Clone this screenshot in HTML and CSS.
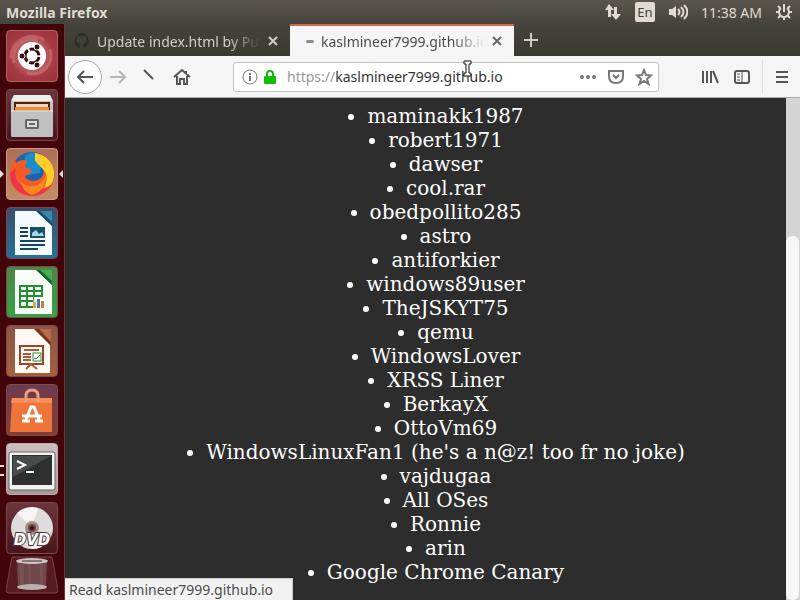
FILE: index.html
```html
<!DOCTYPE html>
<html lang="en">
<head>
    <meta charset="UTF-8">
    <meta name="viewport" content="width=device-width, initial-scale=1.0">
    <title>Mozilla Firefox</title>
    <link rel="stylesheet" href="styles.css">
</head>
<body>
    <header class="panel">
        <h1 class="panel-title">Mozilla Firefox</h1>
        <div class="indicators">
            <svg width="18" height="18" viewBox="0 0 18 18" fill="#dfdbd2"><path d="M5 1l5 6H7v7H4V7H1z"/><path d="M12 17L7 11h3V4h3v7h4z"/></svg>
            <span class="lang">En</span>
            <svg class="volume" width="20" height="18" viewBox="0 0 20 18" fill="none" stroke="#dfdbd2" stroke-width="2"><path d="M1 6h3l4-3v12l-4-3H1z" fill="#dfdbd2" stroke="none"/><path d="M10 6q3 3 0 6M13 4q5 5 0 10M16 2q7 7 0 14"/></svg>
            <time class="clock">11:38 AM</time>
            <svg width="18" height="18" viewBox="0 0 18 18" fill="none" stroke="#dfdbd2" stroke-width="2"><path d="M6 5a5 5 0 1 0 6 0M9 1v8M1 9h3M14 9h3M3 3l2 2M15 3l-2 2M3 15l2-2M15 15l-2-2M9 14v3"/></svg>
        </div>
    </header>

    <div class="desktop">
        <nav class="launcher">
            <ul class="apps">
                <li>
                    <button class="app dash" aria-label="Search your computer">
                        <svg viewBox="0 0 52 52"><path d="M8 33C4 18 17 6 31 10M44 19c5 15-8 28-23 24M5 28C5 10 24 1 38 10" fill="none" stroke="#d98b8b" stroke-width="3" opacity=".4"/><circle cx="26" cy="26" r="14" fill="#fff"/><circle cx="26" cy="26" r="7" fill="none" stroke="#3b0a0e" stroke-width="3" stroke-dasharray="12.7 2" stroke-dashoffset="-1"/><g fill="#3b0a0e" stroke="#fff"><circle cx="16" cy="26" r="3"/><circle cx="31" cy="17" r="3"/><circle cx="31" cy="35" r="3"/></g></svg>
                    </button>
                </li>
                <li>
                    <button class="app files" aria-label="Files">
                        <svg viewBox="0 0 52 52"><path d="M8 6h36l3 5v35q0 2-2 2H7q-2 0-2-2V11z" fill="#c3c3c1"/><path d="M8 6h36l2 6H6z" fill="#eee"/><path d="M8 13h36v9H8z" fill="#532012"/><path d="M10 15h32v3H10z" fill="#f4d6b0"/><path d="M9 18h34v4H9z" fill="#e58d42"/><path d="M5 22h42v24q0 2-2 2H7q-2 0-2-2z" fill="#bfc0bf"/><path d="M5 22h42" stroke="#eee"/><rect x="20" y="31" width="12" height="8" rx="1" fill="#ddd" stroke="#666" stroke-width="2"/><path d="M23 35h6" stroke="#666" stroke-width="2"/></svg>
                    </button>
                </li>
                <li class="running active">
                    <button class="app firefox" aria-label="Firefox">
                        <svg viewBox="0 0 52 52"><circle cx="26" cy="25" r="21" fill="#1d62ad"/><path d="M19 8q8-7 18 0l-3 17-17 3z" fill="#1b8ccc"/><path d="M29 5c10 1 18 9 19 18 2 15-9 25-22 25C12 48 3 38 4 25 4 19 7 14 9 10l1 5c3-3 8-4 12-2-3 2-3 5-2 7l6 2c0 4-6 4-7 7 4 5 11 5 16 1 6-6 1-13-3-17-2-4-3-6-3-8z" fill="#f65a25"/><path d="M29 5c12 2 18 10 19 19 1 10-6 19-15 22 6-5 9-13 7-20-2-6-9-9-11-14z" fill="#ffcf28"/><path d="M4 25c0 13 9 22 22 23 9 0 16-5 20-12-9 7-22 8-31 1-5-4-7-10-5-17z" fill="#ed3448"/><path d="M15 34c9 8 20 4 25-6 0 9-5 17-14 19-6-2-10-7-11-13z" fill="#ff871f"/></svg>
                    </button>
                </li>
                <li>
                    <button class="app writer" aria-label="LibreOffice Writer">
                        <svg viewBox="0 0 52 52"><path d="M9 4h22l15 15v29H9z" fill="#f5fbfc"/><path d="M30 4h16v15z" fill="#164d70"/><path d="M34 4h12v11z" fill="#3c86aa"/><path d="M14 21h8M14 25h8M14 29h8M14 34h25M14 38h25M14 42h18" stroke="#13475f" stroke-width="2"/><rect x="24" y="20" width="15" height="11" fill="#17506b"/><path d="M26 29v-3l4-3 3 4 3-2 2 4z" fill="#a8d5df"/></svg>
                    </button>
                </li>
                <li>
                    <button class="app calc" aria-label="LibreOffice Calc">
                        <svg viewBox="0 0 52 52"><path d="M9 4h22l15 15v29H9z" fill="#f7fff7"/><path d="M30 4h16v15z" fill="#17632a"/><path d="M34 4h12v11z" fill="#49ad54"/><path d="M14 20h22v21H14zM14 25h22M14 30h22M14 35h22M21 20v21M28 20v21" fill="none" stroke="#258d33" stroke-width="2"/><path d="M28 31h11v11H27z" fill="#fff"/><path d="M27 36h3v6h-3z" fill="#d8a846"/><path d="M31 33h3v9h-3z" fill="#4a789a"/><path d="M35 35h3v7h-3z" fill="#c58142"/></svg>
                    </button>
                </li>
                <li>
                    <button class="app impress" aria-label="LibreOffice Impress">
                        <svg viewBox="0 0 52 52"><path d="M9 4h22l13 15v29H9z" fill="#fff9f4"/><path d="M28 4h17v17z" fill="#75351d"/><path d="M33 4h12v13z" fill="#b86b48"/><rect x="14" y="21" width="23" height="18" fill="#fff" stroke="#984725" stroke-width="2"/><path d="M18 25h15M17 29h8M17 32h8M17 35h8M20 44l5-5 6 5" fill="none" stroke="#b45734" stroke-width="2"/><rect x="27" y="28" width="8" height="8" fill="#fff" stroke="#348440"/><path d="M28 33l2 1 4-4" fill="none" stroke="#348440"/></svg>
                    </button>
                </li>
                <li>
                    <button class="app software" aria-label="Ubuntu Software">
                        <svg viewBox="0 0 52 52"><path d="M6 14h40v34H4z" fill="#ed7539"/><path d="M6 14h40v5H5z" fill="#f68d56"/><path d="M20 18v-6q0-6 6-6t6 6v6" fill="none" stroke="#e9a27e" stroke-width="3"/><path d="M19 38l6-15h3l6 15M16 32h20M16 37h8M29 37h8" fill="none" stroke="#fff" stroke-width="3"/></svg>
                    </button>
                </li>
                <li class="running double">
                    <button class="app terminal" aria-label="Terminal">
                        <svg viewBox="0 0 52 52"><rect x="3" y="9" width="46" height="38" rx="2" fill="#f2f2f0" stroke="#6b6766"/><rect x="6" y="12" width="40" height="30" fill="#2e3030"/><path d="M7 13h38L7 34z" fill="#4a4c4b"/><path d="M11 18l8 4-8 4M20 29h8" fill="none" stroke="#fff" stroke-width="2"/></svg>
                    </button>
                </li>
                <li>
                    <button class="app disc" aria-label="DVD">
                        <svg viewBox="0 0 52 52"><circle cx="26" cy="26" r="21" fill="#dedddc"/><path d="M26 26L11 11q9-8 21-5zM26 26l18 11q-7 10-18 10z" fill="#f6f5f4"/><circle cx="26" cy="26" r="7" fill="#a88c8c"/><circle cx="26" cy="26" r="3" fill="#301013" stroke="#6a4648" stroke-width="2"/><text class="disc-text" x="26" y="43" text-anchor="middle">DVD</text></svg>
                    </button>
                </li>
            </ul>
            <button class="trash" aria-label="Trash">
                <svg viewBox="0 0 52 38"><path d="M6 1h40l6 33q0 3-3 3H3q-3 0-3-3z" fill="#591b20" stroke="#7a4044"/><path d="M11 6h30l-1 25q-14 5-28 0z" fill="#70474a"/><path d="M14 8h4v23h-4M22 8h3v24h-3M34 8h3v23h-3" fill="#785154"/><ellipse cx="26" cy="5" rx="16" ry="3" fill="#ccc5c3"/><path d="M16 5h20" stroke="#887879" stroke-width="2"/><ellipse cx="26" cy="31" rx="15" ry="3" fill="#b9b0ae"/></svg>
            </button>
        </nav>

        <main class="browser">
            <div class="tabs">
                <div class="tab">
                    <svg class="favicon" width="16" height="16" viewBox="0 0 16 16"><path fill="#2b2c27" d="M8 0a8 8 0 0 0-3 15c.4.1.6-.2.6-.5v-2c-2 .4-2.6-.8-2.8-1.3-.2-.4-.6-.9-1-1 1-.3 1.6.6 1.9 1 .6 1 1.5.9 2 .6 0-.5.3-.9.5-1.1-2-.2-3.8-1-3.8-4 0-.9.3-1.6.8-2.1-.1-.4-.3-1.1.1-2.1 0 0 .7-.2 2.2.8a8 8 0 0 1 4 0c1.5-1 2.2-.8 2.2-.8.4 1 .2 1.7 0 2.1.6.5.9 1.2.9 2.1 0 3-1.900 3.800-3.700 4 .3.3.6.8.6 1.500v2.300c0 .3.2.6.6.5A8 8 0 0 0 8 0z"/></svg>
                    <a class="tab-title" href="#">Update index.html by PuffyTheWolf</a>
                    <button class="close" aria-label="Close tab"><svg width="10" height="10" viewBox="0 0 10 10"><path d="M1 1l8 8M9 1l-8 8"/></svg></button>
                </div>
                <div class="tab current">
                    <span class="loading"></span>
                    <a class="tab-title" href="#">kaslmineer7999.github.io</a>
                    <button class="close" aria-label="Close tab"><svg width="10" height="10" viewBox="0 0 10 10"><path d="M1 1l8 8M9 1l-8 8"/></svg></button>
                </div>
                <button class="new-tab" aria-label="New tab"><svg width="14" height="14" viewBox="0 0 14 14"><path d="M7 0v14M0 7h14"/></svg></button>
            </div>

            <div class="toolbar">
                <button class="tool back" aria-label="Back"><svg width="18" height="18" viewBox="0 0 18 18"><path d="M17 9H2M8 3L2 9l6 6"/></svg></button>
                <button class="tool forward" aria-label="Forward"><svg width="18" height="18" viewBox="0 0 18 18"><path d="M1 9h15M10 3l6 6-6 6"/></svg></button>
                <button class="tool" aria-label="Stop"><svg width="18" height="18" viewBox="0 0 18 18"><path d="M3 2l9 9"/></svg></button>
                <button class="tool" aria-label="Home"><svg width="18" height="18" viewBox="0 0 18 18"><path d="M1 9l8-7 8 7M4 8v8h3v-5h4v5h3V8M13 3v3"/></svg></button>
                <div class="urlbar">
                    <svg width="16" height="16" viewBox="0 0 16 16" fill="none" stroke="#777"><circle cx="8" cy="8" r="7"/><path d="M8 7v5M8 4v2" stroke-width="2"/></svg>
                    <svg class="lock" width="14" height="16" viewBox="0 0 14 16"><path d="M4 8V5q0-3 3-3t3 3v3" fill="none" stroke="#12bc00" stroke-width="2"/><rect x="1" y="7" width="12" height="8" rx="1" fill="#12bc00"/></svg>
                    <label class="scheme" for="url">https://</label>
                    <input type="text" id="url" value="kaslmineer7999.github.io">
                    <button class="page-action" aria-label="Page actions"><svg width="18" height="18" viewBox="0 0 18 18" fill="#777"><circle cx="3" cy="9" r="2"/><circle cx="9" cy="9" r="2"/><circle cx="15" cy="9" r="2"/></svg></button>
                    <button class="page-action" aria-label="Save to Pocket"><svg width="18" height="18" viewBox="0 0 18 18" fill="none" stroke="#777" stroke-width="2"><path d="M2 3h14v5q0 7-7 7T2 8zM6 7l3 3 3-3"/></svg></button>
                    <button class="page-action" aria-label="Bookmark this page"><svg width="18" height="18" viewBox="0 0 18 18" fill="none" stroke="#777" stroke-width="2"><path d="M9 2l2 5 5 .5-4 3.500 1.500 5L9 13l-4.500 3L6 11 2 7.500 7 7z"/></svg></button>
                </div>
                <button class="tool library" aria-label="Library"><svg width="18" height="18" viewBox="0 0 18 18"><path d="M2 3v12M6 3v12M10 3v12M12 3l5 12"/></svg></button>
                <button class="tool" aria-label="Sidebars"><svg width="18" height="18" viewBox="0 0 18 18"><rect x="2" y="3" width="14" height="12" rx="2"/><path d="M9 3v12M4 6h3M4 9h3M4 12h3" stroke-width="1"/></svg></button>
                <button class="tool menu" aria-label="Open menu"><svg width="14" height="18" viewBox="0 0 14 18"><path d="M1 4h12M1 9h12M1 14h12"/></svg></button>
            </div>

            <div class="page">
                <ul class="names">
                    <li>maminakk1987</li>
                    <li>robert1971</li>
                    <li>dawser</li>
                    <li>cool.rar</li>
                    <li>obedpollito285</li>
                    <li>astro</li>
                    <li>antiforkier</li>
                    <li>windows89user</li>
                    <li>TheJSKYT75</li>
                    <li>qemu</li>
                    <li>WindowsLover</li>
                    <li>XRSS Liner</li>
                    <li>BerkayX</li>
                    <li>OttoVm69</li>
                    <li>WindowsLinuxFan1 (he's a n@z! too fr no joke)</li>
                    <li>vajdugaa</li>
                    <li>All OSes</li>
                    <li>Ronnie</li>
                    <li>arin</li>
                    <li>Google Chrome Canary</li>
                </ul>
                <div class="scrollbar"><div class="thumb"></div></div>
                <div class="status">Read kaslmineer7999.github.io</div>
            </div>
        </main>
    </div>

    <svg class="pointer" width="9" height="17" viewBox="0 0 9 17"><path d="M1 1h7v3H6v9h2v3H1v-3h2V4H1z" fill="#fff" stroke="#111"/></svg>
</body>
</html>
```

FILE: styles.css
```css
* {
    box-sizing: border-box;
}

body {
    margin: 0;
    height: 100vh;
    display: flex;
    flex-direction: column;
    overflow: hidden;
    background-color: #3c3b37;
    font-family: "Noto Sans", sans-serif;
    font-size: 14px;
    color: #4c4c4c;
}

button {
    padding: 0;
    border: none;
    background: none;
    display: flex;
    align-items: center;
    justify-content: center;
}

a {
    color: inherit;
    text-decoration: none;
}

svg {
    flex: none;
}

/* top panel */
.panel {
    height: 24px;
    flex: none;
    padding: 0 7px 0 6px;
    display: flex;
    align-items: center;
    justify-content: space-between;
    background: linear-gradient(#5b564d, #45433c);
    color: #dfdbd2;
}

.panel-title {
    margin: 0;
    font-size: 14px;
    font-weight: bold;
}

.indicators {
    display: flex;
    align-items: center;
    gap: 13px;
}

.lang {
    width: 20px;
    height: 20px;
    border-radius: 2px;
    background-color: #dfdbd2;
    color: #45433c;
    font-size: 13px;
    line-height: 20px;
    text-align: center;
}

.desktop {
    flex: 1;
    min-height: 0;
    display: flex;
}

/* launcher */
.launcher {
    width: 65px;
    flex: none;
    padding: 6px 7px 0 6px;
    background-color: #42060a;
    border-right: 1px solid #68383b;
}

.apps {
    margin: 0 0 2px;
    padding: 0;
    list-style: none;
    display: flex;
    flex-direction: column;
    gap: 7px;
}

.apps li {
    position: relative;
}

.app {
    width: 52px;
    height: 52px;
    border: 1px solid #7c474b;
    border-radius: 4px;
    background: linear-gradient(#6b353b, #48151b);
}

.app svg {
    width: 52px;
    height: 52px;
}

.dash {
    background: radial-gradient(#e39a9a, #a83c46 60%, #962f39);
    border-color: #b05f65;
}

.firefox {
    background: linear-gradient(#ad7056, #c48b66);
    border-color: #c99b87;
}

.writer {
    background: linear-gradient(#394f6c, #247197);
}

.calc {
    background: linear-gradient(#4c864a, #35a344);
}

.impress {
    background: linear-gradient(#8d5545, #a4613e);
}

.software {
    background: linear-gradient(#6b3b50, #853e30);
}

.terminal {
    background: linear-gradient(#cbc1c1, #a69999);
    border-color: #bbaeb0;
}

.disc-text {
    fill: #fff;
    stroke: #4c3639;
    stroke-width: 2px;
    paint-order: stroke;
    font: italic bold 15px "DejaVu Sans", sans-serif;
}

.running::before,
.active::after {
    content: "";
    position: absolute;
    top: 22px;
    left: -6px;
    border: 4px solid transparent;
    border-left-color: #e6dcdc;
    border-right-width: 0;
}

.active::after {
    left: auto;
    right: -6px;
    border: 4px solid transparent;
    border-right-color: #e6dcdc;
    border-left-width: 0;
}

.double::before {
    width: 4px;
    height: 7px;
    border: solid #e6dcdc;
    border-width: 2px 0;
}

.trash svg {
    width: 52px;
    height: 38px;
}

/* browser window */
.browser {
    flex: 1;
    min-width: 0;
    display: flex;
    flex-direction: column;
}

.tabs {
    height: 32px;
    flex: none;
    display: flex;
    background: linear-gradient(#44433c, #3a3a33);
}

.tab {
    flex: 0 1 225px;
    min-width: 0;
    padding: 2px 12px 0 9px;
    display: flex;
    align-items: center;
    gap: 7px;
    color: #d0cec6;
}

.current {
    flex-basis: 224px;
    padding-left: 16px;
    background-color: #f5f5f5;
    box-shadow: inset 0 2px #d2694a;
    color: #4c4c4c;
}

.tab-title {
    flex: 1;
    min-width: 0;
    overflow: hidden;
    white-space: nowrap;
    -webkit-mask-image: linear-gradient(to right, #000 80%, transparent);
    mask-image: linear-gradient(to right, #000 80%, transparent);
}

.loading {
    width: 8px;
    height: 3px;
    border-radius: 2px;
    background-color: #8a8a8a;
}

.close svg,
.new-tab svg {
    fill: none;
    stroke: #d0cec6;
    stroke-width: 2px;
}

.current .close svg {
    stroke: #666;
}

.new-tab {
    width: 34px;
}

.toolbar {
    height: 42px;
    flex: none;
    padding-left: 3px;
    display: flex;
    align-items: center;
    background-color: #f5f5f5;
    border-bottom: 1px solid #aaa;
}

.tool {
    width: 32px;
    height: 34px;
    flex: none;
}

.tool svg {
    fill: none;
    stroke: #555;
    stroke-width: 2px;
}

.back {
    width: 34px;
    border: 1px solid #aaa;
    border-radius: 50%;
    background-color: #fdfdfd;
}

.forward svg {
    stroke: #b5b5b5;
}

.urlbar {
    flex: 1;
    min-width: 0;
    height: 30px;
    margin: 0 35px;
    padding: 0 0 0 8px;
    display: flex;
    align-items: center;
    border: 1px solid #c2c2c2;
    border-radius: 3px;
    background-color: #fff;
}

.lock {
    margin: 0 10px 0 5px;
}

.scheme {
    color: #999;
}

.urlbar input {
    flex: 1;
    min-width: 0;
    padding: 0;
    border: none;
    outline: none;
    background: none;
    font: inherit;
    color: #333;
}

.page-action {
    width: 28px;
    height: 28px;
}

.menu {
    width: 38px;
    margin-left: 4px;
    border-left: 1px solid #ddd;
}

/* page content */
.page {
    flex: 1;
    min-height: 0;
    position: relative;
    display: flex;
    background-color: #2d2d2d;
}

.names {
    flex: 1;
    margin: 6px 8px;
    padding: 0 0 0 40px;
    color: #fff;
    font-family: "DejaVu Serif", serif;
    font-size: 20px;
    line-height: 24px;
}

.names li {
    width: fit-content;
    margin: 0 auto;
}

.scrollbar {
    width: 14px;
    flex: none;
    padding: 138px 1px 0 0;
    background-color: #d4d4d4;
}

.thumb {
    height: 100%;
    border-radius: 6px;
    background-color: #f7f7f7;
}

.status {
    position: absolute;
    left: 0;
    bottom: 0;
    width: 228px;
    height: 22px;
    padding-left: 4px;
    border: 1px solid #ccc;
    border-width: 1px 1px 0 0;
    background-color: #f2f2f2;
    line-height: 22px;
}

.pointer {
    position: absolute;
    left: 463px;
    top: 60px;
}
```
